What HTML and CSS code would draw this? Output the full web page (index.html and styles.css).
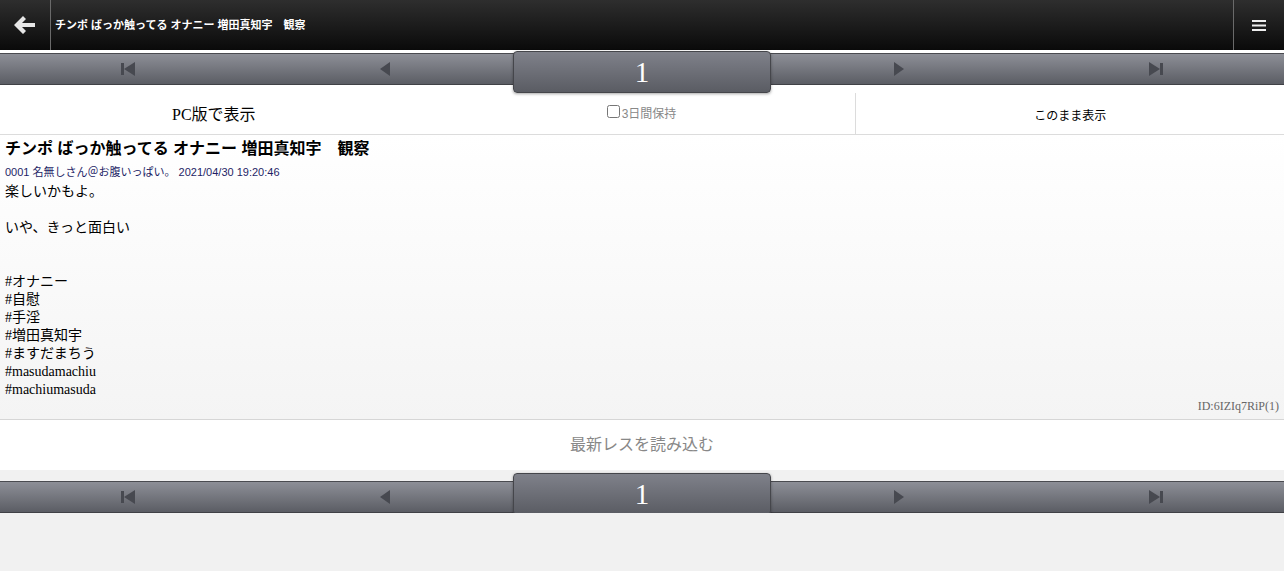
FILE: index.html
```html
<!DOCTYPE html>
<html lang="ja">
<head>
  <meta charset="UTF-8" />
  <meta name="viewport" content="width=device-width, initial-scale=1" />
  <title>チンポ ばっか触ってる オナニー 増田真知宇　観察</title>
  <link rel="stylesheet" href="styles.css">
</head>
<body>
  <header class="topbar">
    <a class="back-btn" href="#" aria-label="戻る">
      <svg width="22" height="18" viewBox="0 0 22 18"><path d="M9 0 L0 9 L9 18 L12 15 L8 11 L21 11 L21 7 L8 7 L12 3 Z" fill="#e6e6e6"/></svg>
    </a>
    <h1 class="thread-title">チンポ ばっか触ってる オナニー 増田真知宇　観察</h1>
    <a class="menu-btn" href="#" aria-label="メニュー">
      <svg width="14" height="11" viewBox="0 0 14 11"><rect y="0" width="14" height="2" fill="#eee"/><rect y="4.5" width="14" height="2" fill="#eee"/><rect y="9" width="14" height="2" fill="#eee"/></svg>
    </a>
  </header>

  <nav class="pager pager-top">
    <a class="pg" href="#"><svg width="14" height="14" viewBox="0 0 14 14"><rect x="0" y="1" width="3" height="12" fill="#474950"/><path d="M14 0 L14 14 L3 7 Z" fill="#474950"/></svg></a>
    <a class="pg" href="#"><svg width="10" height="14" viewBox="0 0 10 14"><path d="M10 0 L10 14 L0 7 Z" fill="#474950"/></svg></a>
    <div class="page-no">1</div>
    <a class="pg" href="#"><svg width="10" height="14" viewBox="0 0 10 14"><path d="M0 0 L0 14 L10 7 Z" fill="#474950"/></svg></a>
    <a class="pg" href="#"><svg width="14" height="14" viewBox="0 0 14 14"><path d="M0 0 L0 14 L11 7 Z" fill="#474950"/><rect x="11" y="1" width="3" height="12" fill="#474950"/></svg></a>
  </nav>

  <div class="view-row">
    <div class="view-cell pc-link">PC版で表示</div>
    <label class="view-cell keep"><input type="checkbox">3日間保持</label>
    <div class="view-cell stay">このまま表示</div>
  </div>

  <article class="post">
    <h2 class="post-title">チンポ ばっか触ってる オナニー 増田真知宇　観察</h2>
    <div class="post-meta">0001 名無しさん＠お腹いっぱい。 2021/04/30 19:20:46</div>
    <div class="post-body">楽しいかもよ。<br><br>いや、きっと面白い<br><br><br>#オナニー<br>#自慰<br>#手淫<br>#増田真知宇<br>#ますだまちう<br>#masudamachiu<br>#machiumasuda</div>
    <div class="post-id">ID:6IZIq7RiP(1)</div>
  </article>

  <div class="reload">最新レスを読み込む</div>

  <nav class="pager pager-bottom">
    <a class="pg" href="#"><svg width="14" height="14" viewBox="0 0 14 14"><rect x="0" y="1" width="3" height="12" fill="#474950"/><path d="M14 0 L14 14 L3 7 Z" fill="#474950"/></svg></a>
    <a class="pg" href="#"><svg width="10" height="14" viewBox="0 0 10 14"><path d="M10 0 L10 14 L0 7 Z" fill="#474950"/></svg></a>
    <div class="page-no">1</div>
    <a class="pg" href="#"><svg width="10" height="14" viewBox="0 0 10 14"><path d="M0 0 L0 14 L10 7 Z" fill="#474950"/></svg></a>
    <a class="pg" href="#"><svg width="14" height="14" viewBox="0 0 14 14"><path d="M0 0 L0 14 L11 7 Z" fill="#474950"/><rect x="11" y="1" width="3" height="12" fill="#474950"/></svg></a>
  </nav>
</body>
</html>
```

FILE: styles.css
```css
body {
  margin: 0;
  background: #f1f1f1;
  font-family: 'Liberation Serif', 'Noto Sans CJK JP', serif;
  color: #000;
}

/* ヘッダー */
.topbar {
  display: flex;
  align-items: stretch;
  height: 50px;
  background: linear-gradient(#2e2e2e, #0a0a0a);
  border-bottom: 3px solid #fff;
}
.back-btn {
  width: 50px;
  display: flex;
  align-items: center;
  justify-content: center;
  border-right: 1px solid #6a6a6a;
}
.thread-title {
  flex: 1;
  margin: 0;
  padding-left: 4px;
  font-family: 'Liberation Sans', 'Noto Sans CJK JP', sans-serif;
  font-size: 11px;
  font-weight: 700;
  color: #fff;
  line-height: 50px;
  white-space: nowrap;
}
.menu-btn {
  width: 50px;
  display: flex;
  align-items: center;
  justify-content: center;
  border-left: 1px solid #6a6a6a;
}

/* ページャー */
.pager {
  display: flex;
  height: 30px;
  background: linear-gradient(#8d8f97, #5b5d64);
  border-top: 1px solid #4a4b50;
  border-bottom: 1px solid #404146;
}
.pager-bottom {
  margin-top: 11px;
}
.pg {
  flex: 1;
  display: flex;
  align-items: center;
  justify-content: center;
}
.page-no {
  flex: 1;
  position: relative;
  z-index: 2;
  display: flex;
  align-items: center;
  justify-content: center;
  border: 1px solid #45464b;
  border-radius: 4px;
  background: linear-gradient(#7f818a, #5a5c63);
  box-shadow: 0 1px 3px rgba(0,0,0,0.35);
  color: #fff;
  font-size: 29px;
}
.pager-top .page-no {
  margin: -3px 0 -9px;
}
.pager-bottom .page-no {
  margin: -9px 0 -3px;
}

/* 表示切替 */
.view-row {
  display: flex;
  height: 49px;
  background: #fff;
  border-bottom: 1px solid #dcdcdc;
}
.view-cell {
  flex: 1;
  display: flex;
  align-items: center;
  justify-content: center;
}
.pc-link {
  font-size: 16px;
  padding-top: 6px;
}
.keep {
  font-family: 'Liberation Sans', 'Noto Sans CJK JP', sans-serif;
  font-size: 12px;
  color: #888;
  padding-top: 6px;
}
.keep input {
  margin: 0 2px 2px 0;
  width: 13px;
  height: 13px;
}
.stay {
  margin-top: 8px;
  border-left: 1px solid #dcdcdc;
  font-family: 'Liberation Sans', 'Noto Sans CJK JP', sans-serif;
  font-size: 12px;
  padding-top: 2px;
}

/* レス */
.post {
  padding: 3px 5px 6px;
  background: linear-gradient(#fff, #f4f4f4);
  border-bottom: 1px solid #d6d6d6;
}
.post-title {
  margin: 0;
  font-family: 'Liberation Sans', 'Noto Sans CJK JP', sans-serif;
  font-size: 16px;
  font-weight: 700;
  line-height: 22px;
}
.post-meta {
  margin: 5px 0 4px;
  font-family: 'Liberation Sans', 'Noto Sans CJK JP', sans-serif;
  font-size: 11px;
  line-height: 14px;
  color: #1e1e66;
}
.post-body {
  font-size: 14px;
  line-height: 18px;
}
.post-id {
  text-align: right;
  font-size: 12px;
  line-height: 14px;
  color: #666;
}

.reload {
  height: 50px;
  line-height: 50px;
  text-align: center;
  background: #fff;
  color: #888;
  font-size: 16px;
}
```
